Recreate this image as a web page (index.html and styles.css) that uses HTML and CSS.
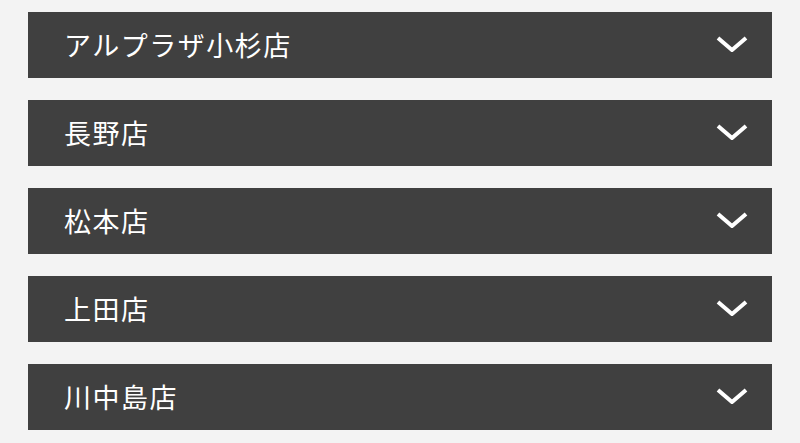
FILE: index.html
```html
<!DOCTYPE html>
<html lang="ja">
<head>
<meta charset="utf-8">
<link rel="stylesheet" href="styles.css">
</head>
<body>
<ul class="list">
  <li class="item"><span class="name">アルプラザ小杉店</span><svg class="chev" viewBox="0 0 32 16"><path d="M2 2 L16 14 L30 2" /></svg></li>
  <li class="item"><span class="name">長野店</span><svg class="chev" viewBox="0 0 32 16"><path d="M2 2 L16 14 L30 2" /></svg></li>
  <li class="item"><span class="name">松本店</span><svg class="chev" viewBox="0 0 32 16"><path d="M2 2 L16 14 L30 2" /></svg></li>
  <li class="item"><span class="name">上田店</span><svg class="chev" viewBox="0 0 32 16"><path d="M2 2 L16 14 L30 2" /></svg></li>
  <li class="item"><span class="name">川中島店</span><svg class="chev" viewBox="0 0 32 16"><path d="M2 2 L16 14 L30 2" /></svg></li>
</ul>
</body>
</html>
```
FILE: styles.css
```css
html, body {
  margin: 0;
  padding: 0;
  background: #f3f3f3;
}
.list {
  list-style: none;
  margin: 0;
  padding: 12px 28px 0;
  display: flex;
  flex-direction: column;
  gap: 22px;
}
.item {
  height: 66px;
  box-sizing: border-box;
  background: #404040;
  display: flex;
  align-items: center;
  justify-content: space-between;
  padding: 0 24px 2px 36px;
}
.name {
  color: #ffffff;
  font-family: "Noto Sans CJK JP", "Noto Sans", sans-serif;
  font-size: 27px;
  letter-spacing: 1.5px;
  line-height: 1;
}
.chev {
  width: 32px;
  height: 16px;
  display: block;
}
.chev path {
  fill: none;
  stroke: #ffffff;
  stroke-width: 4;
  stroke-linecap: butt;
  stroke-linejoin: miter;
}
```
